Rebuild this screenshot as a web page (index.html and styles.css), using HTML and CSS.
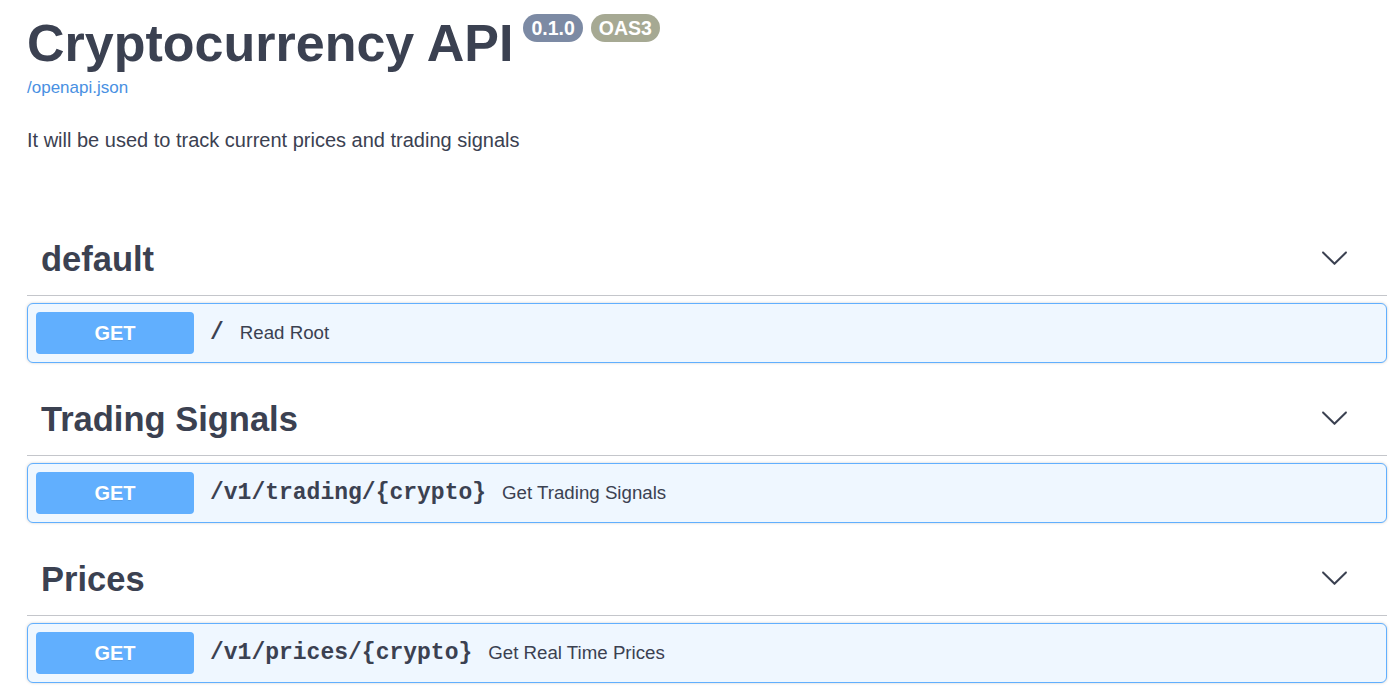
FILE: index.html
```html
<!DOCTYPE html>
<html lang="en">
<head>
<meta charset="utf-8">
<title>Cryptocurrency API</title>
<link rel="stylesheet" href="styles.css">
</head>
<body>
<div class="wrapper">
  <div class="info">
    <div class="title-row">
      <h2 class="title">Cryptocurrency API</h2>
      <span class="badge badge-version">0.1.0</span>
      <span class="badge badge-oas">OAS3</span>
    </div>
    <a class="spec-link" href="#">/openapi.json</a>
    <p class="description">It will be used to track current prices and trading signals</p>
  </div>

  <section class="tag-section">
    <div class="tag">
      <h3 class="tag-name">default</h3>
      <svg class="arrow" viewBox="0 0 20 20" width="29" height="29"><path d="M17.418 6.109c.272-.268.709-.268.979 0s.271.701 0 .969l-7.908 7.83c-.27.268-.707.268-.979 0l-7.908-7.830c-.27-.268-.27-.701 0-.969.271-.268.709-.268.979 0L10 13.25l7.418-7.141z"/></svg>
    </div>
    <div class="opblock">
      <span class="method">GET</span>
      <span class="path">/</span>
      <span class="summary">Read Root</span>
    </div>
  </section>

  <section class="tag-section">
    <div class="tag">
      <h3 class="tag-name">Trading Signals</h3>
      <svg class="arrow" viewBox="0 0 20 20" width="29" height="29"><path d="M17.418 6.109c.272-.268.709-.268.979 0s.271.701 0 .969l-7.908 7.83c-.27.268-.707.268-.979 0l-7.908-7.830c-.27-.268-.27-.701 0-.969.271-.268.709-.268.979 0L10 13.25l7.418-7.141z"/></svg>
    </div>
    <div class="opblock">
      <span class="method">GET</span>
      <span class="path">/v1/trading/{crypto}</span>
      <span class="summary">Get Trading Signals</span>
    </div>
  </section>

  <section class="tag-section">
    <div class="tag">
      <h3 class="tag-name">Prices</h3>
      <svg class="arrow" viewBox="0 0 20 20" width="29" height="29"><path d="M17.418 6.109c.272-.268.709-.268.979 0s.271.701 0 .969l-7.908 7.83c-.27.268-.707.268-.979 0l-7.908-7.830c-.27-.268-.27-.701 0-.969.271-.268.709-.268.979 0L10 13.25l7.418-7.141z"/></svg>
    </div>
    <div class="opblock">
      <span class="method">GET</span>
      <span class="path">/v1/prices/{crypto}</span>
      <span class="summary">Get Real Time Prices</span>
    </div>
  </section>
</div>
</body>
</html>
```

FILE: styles.css
```css
html, body {
  margin: 0;
  padding: 0;
  background: #ffffff;
}

body {
  font-family: "Liberation Sans", Arial, sans-serif;
  color: #3b4151;
  overflow: hidden;
}

.wrapper {
  width: 1360px;
  padding: 13px 0 0 27px;
}

.info {
  margin: 0 0 71px 0;
}

.title-row {
  display: flex;
  align-items: flex-start;
}

.title {
  margin: 0;
  font-size: 52px;
  line-height: 61px;
  font-weight: 700;
  color: #3b4151;
}

.badge {
  display: inline-block;
  margin-top: 1px;
  height: 28px;
  line-height: 28px;
  padding: 0 8px;
  border-radius: 14px;
  font-size: 19.5px;
  font-weight: 700;
  color: #ffffff;
}

.badge-version {
  margin-left: 10px;
  background: #7c8aa4;
}

.badge-oas {
  margin-left: 8px;
  background: #a6a993;
}

.spec-link {
  display: block;
  margin-top: 4px;
  font-size: 17px;
  line-height: 20px;
  color: #4990e2;
  text-decoration: none;
}

.description {
  margin: 31px 0 0 0;
  font-size: 20px;
  line-height: 23px;
  color: #3b4151;
}

.tag-section {
  margin-bottom: 20px;
}

.tag {
  display: flex;
  align-items: center;
  justify-content: space-between;
  height: 44px;
  padding: 14px 38px 14px 14px;
  border-bottom: 1px solid #c4c6cb;
  margin-bottom: 7px;
}

.tag-name {
  margin: 0;
  font-size: 34.5px;
  line-height: 44px;
  font-weight: 700;
  color: #3b4151;
}

.arrow {
  fill: #3b4151;
  margin-top: -4px;
}

.opblock {
  display: flex;
  align-items: center;
  height: 42px;
  padding: 8px;
  border: 1px solid #61affe;
  border-radius: 6px;
  background: #eff7ff;
  box-shadow: 0 0 3px rgba(0, 0, 0, 0.19);
}

.method {
  width: 158px;
  height: 42px;
  line-height: 42px;
  text-align: center;
  background: #61affe;
  border-radius: 4px;
  color: #ffffff;
  font-size: 20px;
  font-weight: 700;
  text-shadow: 0 1px 0 rgba(0, 0, 0, 0.1);
}

.path {
  padding: 0 16px;
  font-family: "Liberation Mono", "Courier New", monospace;
  font-size: 23px;
  font-weight: 700;
  color: #3b4151;
}

.summary {
  font-size: 18.7px;
  color: #3b4151;
}
```
